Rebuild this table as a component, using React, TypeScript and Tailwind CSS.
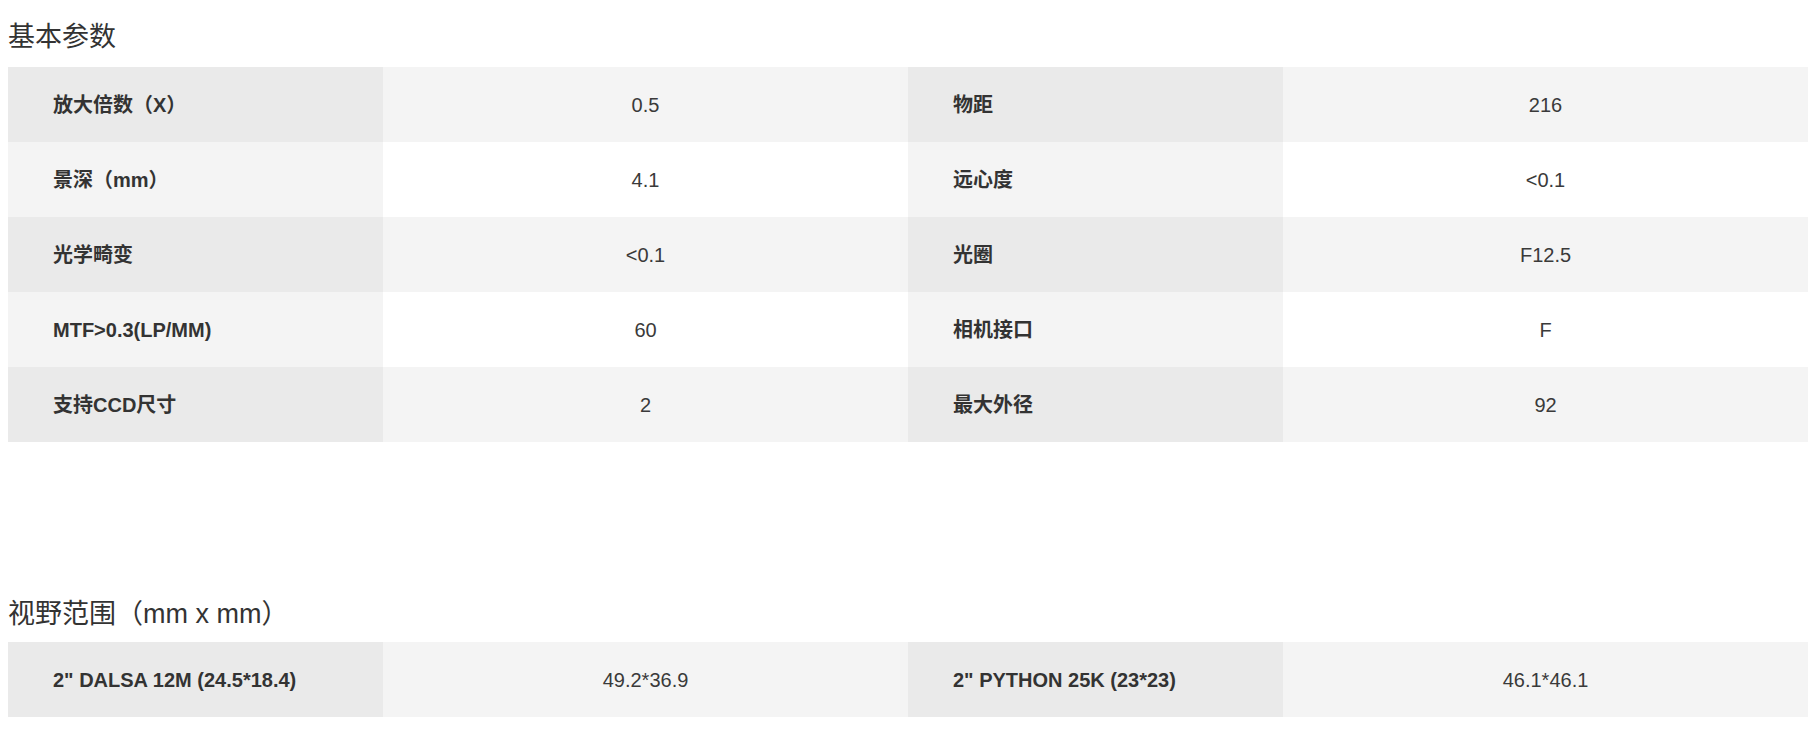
const basic: [string, string, string, string][] = [
  ["放大倍数（X）", "0.5", "物距", "216"],
  ["景深（mm）", "4.1", "远心度", "<0.1"],
  ["光学畸变", "<0.1", "光圈", "F12.5"],
  ["MTF>0.3(LP/MM)", "60", "相机接口", "F"],
  ["支持CCD尺寸", "2", "最大外径", "92"],
];

const fov: [string, string, string, string][] = [
  ['2" DALSA 12M (24.5*18.4)', "49.2*36.9", '2" PYTHON 25K (23*23)', "46.1*46.1"],
];

const font = { fontFamily: '"Liberation Sans", "Noto Sans CJK SC", sans-serif' };

function ParamTable({ rows }: { rows: [string, string, string, string][] }) {
  return (
    <div className="w-[1800px] ml-2">
      {rows.map((r, i) => {
        const odd = i % 2 === 0;
        const labelBg = odd ? "bg-[#eaeaea]" : "bg-[#f4f4f4]";
        const valueBg = odd ? "bg-[#f4f4f4]" : "bg-white";
        return (
          <div key={i} className="grid grid-cols-[375px_525px_375px_525px] h-[75px]">
            <div className={`${labelBg} flex items-center pl-[45px] font-bold`}>{r[0]}</div>
            <div className={`${valueBg} flex items-center justify-center text-[#3a3a3a]`}>{r[1]}</div>
            <div className={`${labelBg} flex items-center pl-[45px] font-bold`}>{r[2]}</div>
            <div className={`${valueBg} flex items-center justify-center text-[#3a3a3a]`}>{r[3]}</div>
          </div>
        );
      })}
    </div>
  );
}

export default function App() {
  return (
    <div className="w-[1813px] h-[735px] bg-white text-[#333] text-[20px] overflow-hidden" style={font}>
      <h2 className="pl-2 pt-[23px] mb-[16px] text-[27px] leading-[28px] font-normal">基本参数</h2>
      <ParamTable rows={basic} />
      <h2 className="pl-2 mt-[158px] mb-[14px] text-[27px] leading-[28px] font-normal">视野范围（mm x mm）</h2>
      <ParamTable rows={fov} />
    </div>
  );
}
